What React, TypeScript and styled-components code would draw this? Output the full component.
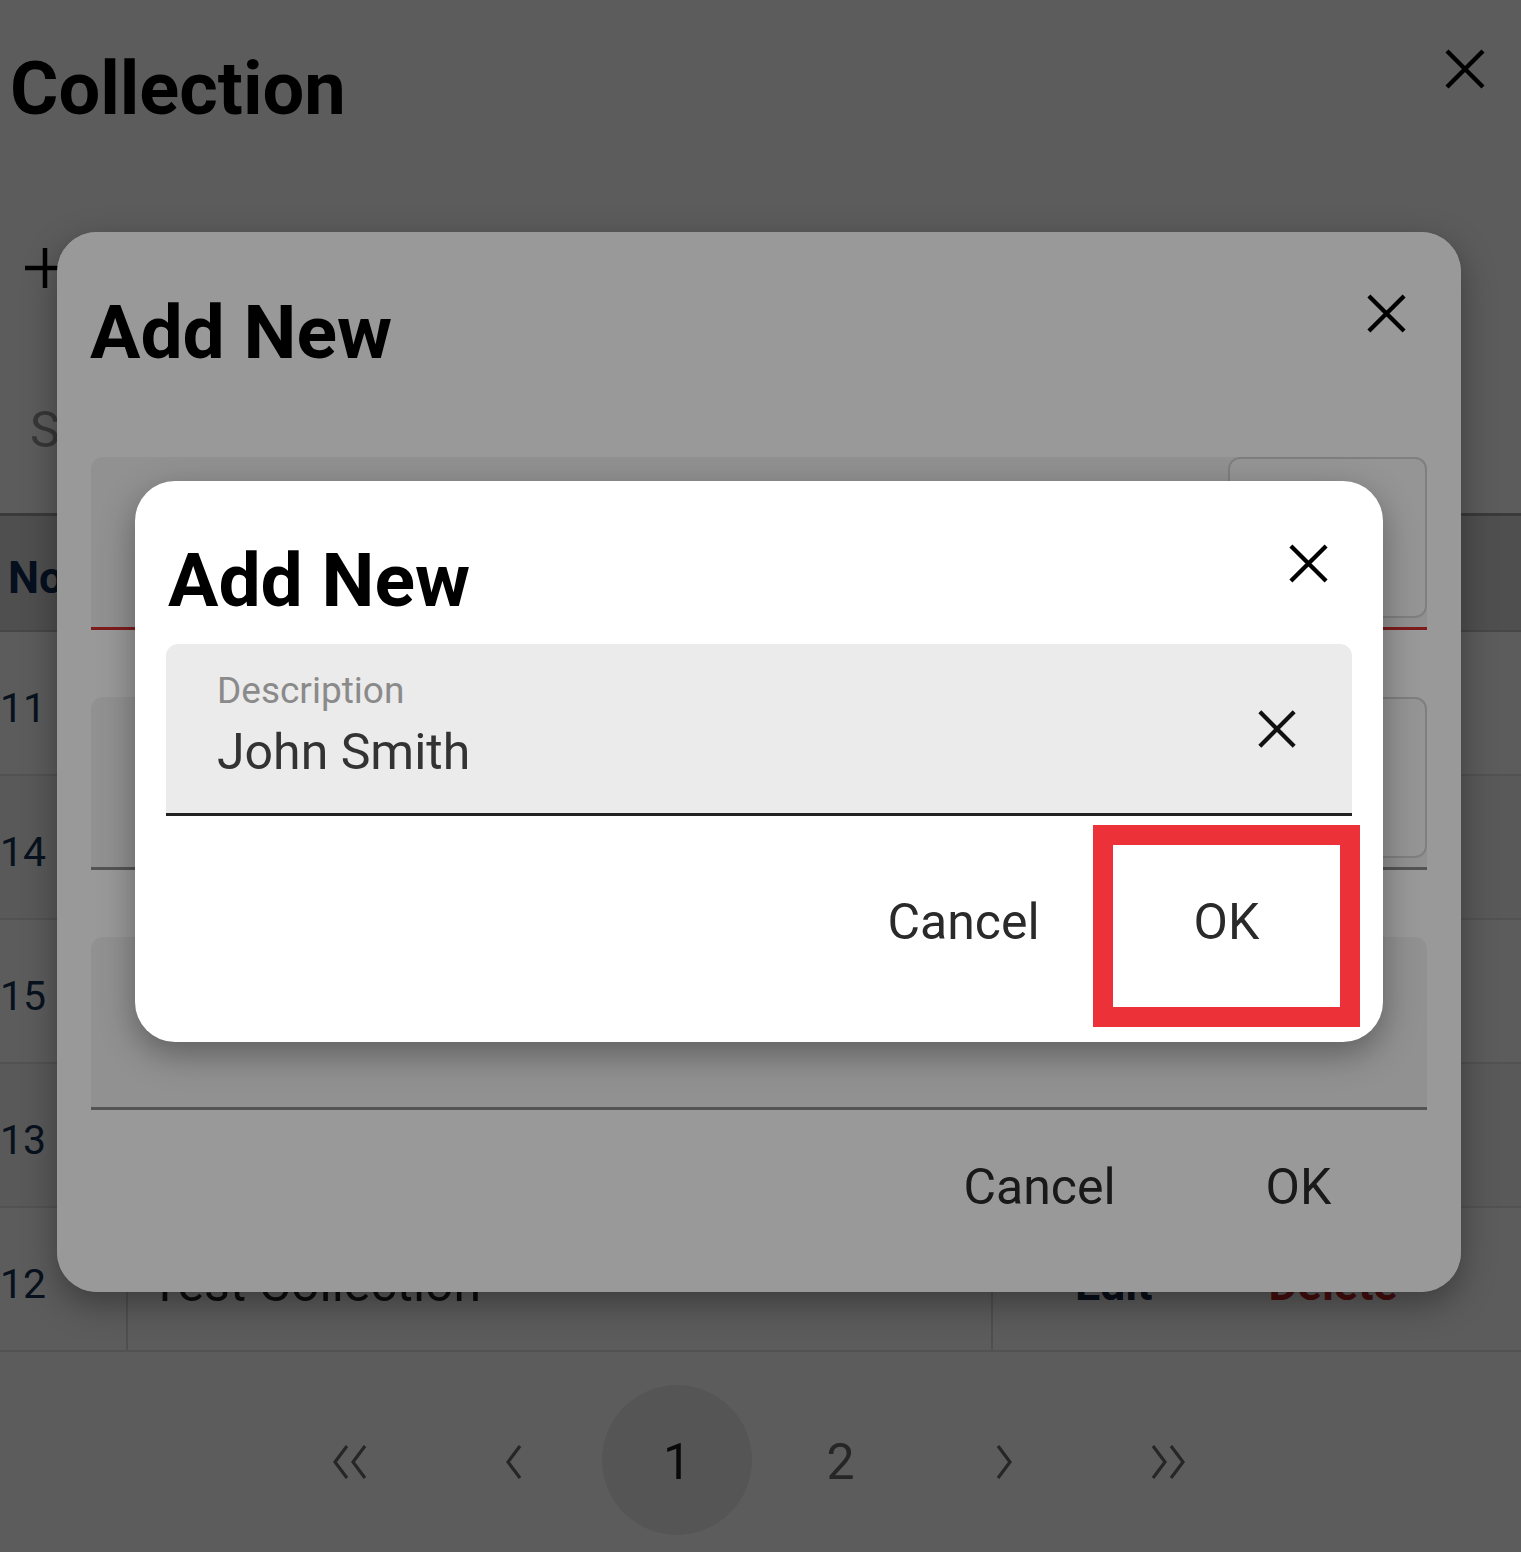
import React from "react";
import styled, { createGlobalStyle } from "styled-components";

const GlobalStyle = createGlobalStyle`
  html, body { margin: 0; padding: 0; }
  *, *::before, *::after { box-sizing: border-box; }
  body {
    font-family: Roboto, "Noto Sans", "Liberation Sans", sans-serif;
    background: #5c5c5c;
  }
`;

const Page = styled.div`
  position: relative;
  width: 1521px;
  height: 1552px;
  overflow: hidden;
  background: #ffffff;
  color: #222;
`;

const TopBar = styled.div`
  display: flex;
  justify-content: space-between;
  align-items: flex-start;
  padding: 47px 34px 0 10px;
`;

const PageTitle = styled.h1`
  margin: 5px 0 0;
  font-size: 74px;
  line-height: 74px;
  font-weight: 700;
  color: #000;
`;

const IconButton = styled.span<{ $color?: string }>`
  display: flex;
  color: ${({ $color }) => $color || "#000"};
`;

const ToolRow = styled.div`
  height: 164px;
  padding: 120px 0 0 25px;
  color: #000;
`;

const SearchField = styled.div`
  height: 226px;
  padding: 115px 0 0 30px;
  border-bottom: 3px solid #a2a2a2;
  font-size: 50px;
  line-height: 50px;
  color: #9a9a9a;
`;

const TableRow = styled.div<{ $head?: boolean; $striped?: boolean }>`
  display: grid;
  grid-template-columns: 128px 865px 1fr;
  height: ${({ $head }) => ($head ? 116 : 144)}px;
  background: ${({ $head, $striped }) =>
    $head ? "#dbdbdb" : $striped ? "#f5f5f5" : "#ffffff"};
  border-bottom: 2px solid ${({ $head }) => ($head ? "#c4c4c4" : "#e4e4e4")};
`;

const Cell = styled.div<{ $pad?: number; $divider?: boolean }>`
  display: flex;
  align-items: center;
  gap: 116px;
  padding-left: ${({ $pad }) => $pad || 0}px;
  padding-top: 10px;
  border-right: ${({ $divider }) => ($divider ? "2px solid #dcdcdc" : "none")};
`;

const HeadText = styled.span`
  font-size: 44px;
  font-weight: 700;
  color: #0f2b55;
`;

const NumText = styled.span`
  font-size: 41px;
  color: #173454;
`;

const NameText = styled.span`
  font-size: 50px;
  color: #222;
`;

const ActionText = styled.span<{ $danger?: boolean }>`
  font-size: 45px;
  font-weight: 700;
  color: ${({ $danger }) => ($danger ? "#c62828" : "#1b2a4a")};
`;

const Pager = styled.div`
  display: flex;
  gap: 13.5px;
  margin-top: 33px;
  padding-left: 275px;
`;

const PageItem = styled.div<{ $active?: boolean }>`
  width: 150px;
  height: 150px;
  border-radius: 50%;
  display: flex;
  align-items: center;
  justify-content: center;
  padding-top: 4px;
  font-size: 50px;
  color: ${({ $active }) => ($active ? "#1a1a1a" : "#6a6a6a")};
  background: ${({ $active }) => ($active ? "#ebebeb" : "transparent")};
`;

const Scrim = styled.div<{ $alpha: number }>`
  position: absolute;
  inset: 0;
  border-radius: inherit;
  background: rgba(0, 0, 0, ${({ $alpha }) => $alpha});
`;

const Dialog = styled.div<{
  $left: number;
  $top: number;
  $width: number;
  $height: number;
}>`
  position: absolute;
  left: ${({ $left }) => $left}px;
  top: ${({ $top }) => $top}px;
  width: ${({ $width }) => $width}px;
  height: ${({ $height }) => $height}px;
  border-radius: 40px;
  background: #ffffff;
  box-shadow: 0 12px 34px rgba(0, 0, 0, 0.35);
  display: flex;
  flex-direction: column;
`;

const DialogHeader = styled.div<{ $top: number }>`
  display: flex;
  justify-content: space-between;
  align-items: flex-start;
  padding: ${({ $top }) => $top}px 53px 0 33px;
`;

const DialogTitle = styled.h2<{ $offset: number }>`
  margin: ${({ $offset }) => $offset}px 0 0;
  font-size: 75px;
  line-height: 75px;
  font-weight: 700;
  color: #000;
`;

const Field = styled.div<{ $line: string; $thick?: boolean; $gap: number; $side: number }>`
  display: flex;
  align-items: center;
  height: ${({ $thick }) => ($thick ? 172 : 173)}px;
  margin: ${({ $gap }) => $gap}px ${({ $side }) => $side}px 0;
  background: #f2f2f2;
  border-radius: 12px 12px 0 0;
  border-bottom: 3px solid ${({ $line }) => $line};
`;

const FocusField = styled(Field)`
  background: #ebebeb;
`;

const FieldBody = styled.div`
  flex: 1;
  align-self: stretch;
  display: flex;
  flex-direction: column;
  padding: 28px 0 0 51px;
`;

const FieldLabel = styled.span`
  font-size: 37px;
  line-height: 37px;
  color: #8a8a8a;
`;

const FieldValue = styled.span`
  margin-top: 18px;
  font-size: 50px;
  line-height: 50px;
  color: #333;
`;

const FieldAddon = styled.div`
  width: 199px;
  align-self: stretch;
  margin-bottom: 9px;
  border: 2px solid #d4d4d4;
  border-radius: 12px;
  background: #f8f8f8;
`;

const ClearSlot = styled.span`
  display: flex;
  margin-right: 54px;
  color: #111;
`;

const ButtonRow = styled.div<{ $gap: number; $right: number; $top: number }>`
  display: flex;
  justify-content: flex-end;
  gap: ${({ $gap }) => $gap}px;
  padding-right: ${({ $right }) => $right}px;
  margin-top: ${({ $top }) => $top}px;
`;

const TextButton = styled.button`
  position: relative;
  width: 227px;
  height: 162px;
  border: none;
  background: transparent;
  font-family: Roboto, "Noto Sans", sans-serif;
  font-size: 50px;
  color: #2a2a2a;
  display: flex;
  align-items: center;
  justify-content: center;
  padding: 0 0 8px;
`;

const Highlight = styled.span`
  position: absolute;
  inset: -20px;
  border: 20px solid #ec3238;
  pointer-events: none;
`;

const Cross = ({ size, weight = 4.4 }: { size: number; weight?: number }) => (
  <svg width={size} height={size} viewBox="0 0 44 44" fill="none">
    <path d="M4 4 L40 40 M40 4 L4 40" stroke="currentColor" strokeWidth={weight} />
  </svg>
);

const Plus = () => (
  <svg width={40} height={44} viewBox="0 0 40 44" fill="none">
    <path d="M20 2 V42 M0 22 H40" stroke="currentColor" strokeWidth={4.5} />
  </svg>
);

const Chevron = ({ dir, double }: { dir: "left" | "right"; double?: boolean }) => {
  const one = dir === "left" ? "M16 2 L4 18 L16 34" : "M4 2 L16 18 L4 34";
  const two = dir === "left" ? "M34 2 L22 18 L34 34" : "M22 2 L34 18 L22 34";
  return (
    <svg width={double ? 38 : 20} height={36} viewBox={`0 0 ${double ? 38 : 20} 36`} fill="none">
      <path d={one} stroke="currentColor" strokeWidth={3.2} />
      {double && <path d={two} stroke="currentColor" strokeWidth={3.2} />}
    </svg>
  );
};

// only the last row's name and actions show below the dialogs
const rows = [
  { no: 11, name: "", striped: false },
  { no: 14, name: "", striped: true },
  { no: 15, name: "", striped: false },
  { no: 13, name: "", striped: true },
  { no: 12, name: "Test Collection", striped: false },
];

export default function App() {
  return (
    <>
      <GlobalStyle />
      <Page>
        <TopBar>
          <PageTitle>Collection</PageTitle>
          <IconButton>
            <Cross size={44} />
          </IconButton>
        </TopBar>
        <ToolRow>
          <Plus />
        </ToolRow>
        <SearchField>Search</SearchField>
        <TableRow $head>
          <Cell $pad={8}>
            <HeadText>No</HeadText>
          </Cell>
          <Cell $pad={22} />
          <Cell $pad={82} />
        </TableRow>
        {rows.map((r) => (
          <TableRow key={r.no} $striped={r.striped}>
            <Cell $pad={0} $divider>
              <NumText>{r.no}</NumText>
            </Cell>
            <Cell $pad={22} $divider>
              {r.name && <NameText>{r.name}</NameText>}
            </Cell>
            <Cell $pad={82}>
              {r.name && (
                <>
                  <ActionText>Edit</ActionText>
                  <ActionText $danger>Delete</ActionText>
                </>
              )}
            </Cell>
          </TableRow>
        ))}
        <Pager>
          <PageItem>
            <Chevron dir="left" double />
          </PageItem>
          <PageItem>
            <Chevron dir="left" />
          </PageItem>
          <PageItem $active>1</PageItem>
          <PageItem>2</PageItem>
          <PageItem>
            <Chevron dir="right" />
          </PageItem>
          <PageItem>
            <Chevron dir="right" double />
          </PageItem>
        </Pager>

        <Scrim $alpha={0.64} />

        <Dialog $left={57} $top={232} $width={1404} $height={1060}>
          <DialogHeader $top={60}>
            <DialogTitle $offset={3}>Add New</DialogTitle>
            <IconButton>
              <Cross size={43} />
            </IconButton>
          </DialogHeader>
          <Field $line="#d32f2f" $gap={87} $side={34}>
            <FieldBody />
            <FieldAddon />
          </Field>
          <Field $line="#8c8c8c" $gap={67} $side={34}>
            <FieldBody />
            <FieldAddon />
          </Field>
          <Field $line="#8c8c8c" $gap={67} $side={34}>
            <FieldBody />
          </Field>
          <ButtonRow $gap={32} $right={49} $top={0}>
            <TextButton>Cancel</TextButton>
            <TextButton>OK</TextButton>
          </ButtonRow>
          <Scrim $alpha={0.4} />
        </Dialog>

        <Dialog $left={135} $top={481} $width={1248} $height={561}>
          <DialogHeader $top={61}>
            <DialogTitle $offset={1}>Add New</DialogTitle>
            <IconButton>
              <Cross size={43} />
            </IconButton>
          </DialogHeader>
          <FocusField $line="#222" $thick $gap={26} $side={31}>
            <FieldBody>
              <FieldLabel>Description</FieldLabel>
              <FieldValue>John Smith</FieldValue>
            </FieldBody>
            <ClearSlot>
              <Cross size={42} />
            </ClearSlot>
          </FocusField>
          <ButtonRow $gap={36} $right={43} $top={29}>
            <TextButton>Cancel</TextButton>
            <TextButton>
              OK
              <Highlight />
            </TextButton>
          </ButtonRow>
        </Dialog>
      </Page>
    </>
  );
}
